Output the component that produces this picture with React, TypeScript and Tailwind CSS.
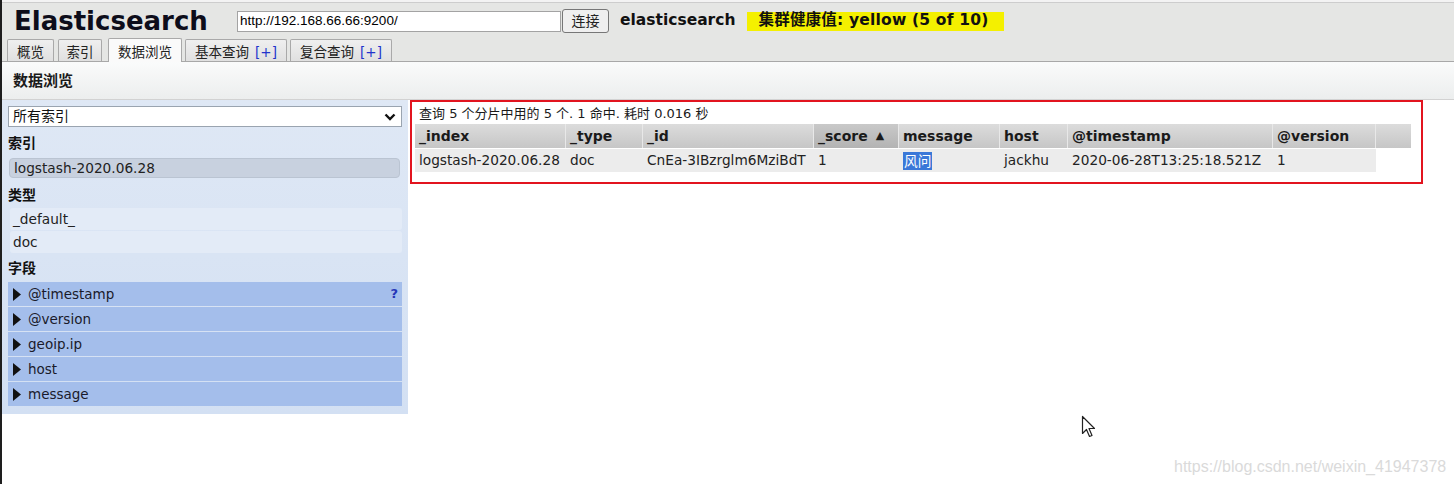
import React from "react";

const F = { fontFamily: '"DejaVu Sans", Verdana, "Noto Sans CJK SC", sans-serif' };

function Tab({ label, plus, active, w, ml }: { label: string; plus?: boolean; active?: boolean; w: string; ml: string }) {
  return (
    <div
      className={`${w} ${ml} flex items-end justify-center border border-b-0 border-[#a9a9a9] rounded-t-[2px] text-[13.5px] leading-[16px] text-[#222] ${
        active ? "bg-[#fafafa] h-[24px] -mb-px pb-[2px] relative z-10" : "h-[22px] pb-px bg-gradient-to-b from-[#efefef] to-[#e0e0e0]"
      }`}
    >
      <span>{label}</span>
      {plus && <span className="ml-[6px] text-[#2233cc]">[+]</span>}
    </div>
  );
}

function FieldRow({ name, q }: { name: string; q?: boolean }) {
  return (
    <div className="h-[24px] bg-[#a4beeb] flex items-center pl-[5px] pr-[4px] text-[13.5px] text-[#1a1a2a]">
      <svg width="8" height="13" viewBox="0 0 8 13" className="mr-[7px]">
        <polygon points="0,0 8,6.5 0,13" fill="#111" />
      </svg>
      <span className="flex-1">{name}</span>
      {q && <span className="font-bold text-[#2536b8] text-[13px]">?</span>}
    </div>
  );
}

const cols: { name: string; w: string; val: string; sorted?: boolean; sel?: boolean }[] = [
  { name: "_index", w: "w-[151px]", val: "logstash-2020.06.28" },
  { name: "_type", w: "w-[77px]", val: "doc" },
  { name: "_id", w: "w-[171px]", val: "CnEa-3IBzrglm6MziBdT" },
  { name: "_score", w: "w-[85px]", val: "1", sorted: true },
  { name: "message", w: "w-[101px]", val: "风问", sel: true },
  { name: "host", w: "w-[68px]", val: "jackhu" },
  { name: "@timestamp", w: "w-[205px]", val: "2020-06-28T13:25:18.521Z" },
  { name: "@version", w: "w-[103px]", val: "1" },
];

export default function App() {
  return (
    <div className="w-[1454px] h-[484px] relative overflow-hidden bg-white border-l-2 border-[#1e1e1e]" style={F}>
      {/* top strip */}
      <div className="h-[3px] bg-[#f3f3f3] border-b border-[#cdcdcd]" />
      {/* header */}
      <div className="bg-[#e5e6e4]">
        <div className="h-[36px] flex items-center pl-[12px]">
          <div className="text-[26px] font-bold text-[#0d0d1a] leading-none w-[223px]">Elasticsearch</div>
          <div className="w-[324px] h-[21px] bg-white border border-[#a3a3a3] flex items-center pl-[2px] text-[13.5px] text-black" style={{ fontFamily: '"Liberation Sans", Arial, sans-serif' }}>
            http://192.168.66.66:9200/
          </div>
          <div className="ml-px w-[47px] h-[24px] rounded-[3px] border border-[#777] bg-[#efefef] flex items-center justify-center text-[14px] text-[#222]">
            连接
          </div>
          <div className="ml-[11px] text-[15.5px] font-bold text-[#111]">elasticsearch</div>
          <div className="ml-[11px] w-[257px] h-[19px] pl-[12px] bg-[#f4f000] flex items-center text-[15.5px] font-bold text-[#111] tracking-[0.2px]">
            集群健康值: yellow (5 of 10)
          </div>
        </div>
        <div className="h-[22px] flex items-end pl-[5px]">
          <Tab label="概览" w="w-[47px]" ml="ml-0" />
          <Tab label="索引" w="w-[44px]" ml="ml-[4px]" />
          <Tab label="数据浏览" w="w-[74px]" ml="ml-[6px]" active />
          <Tab label="基本查询" plus w="w-[102px]" ml="ml-[3px]" />
          <Tab label="复合查询" plus w="w-[102px]" ml="ml-[3px]" />
        </div>
      </div>
      {/* sub header */}
      <div className="h-[39px] border-t border-[#a8a8a8] border-b border-b-[#d2d2d2] bg-gradient-to-b from-[#fafbfb] to-[#eceeee] flex items-center pl-[11px] pt-[2px]">
        <span className="text-[15px] font-bold text-[#1a1a1a]">数据浏览</span>
      </div>
      {/* main */}
      <div className="flex items-start">
        {/* left panel */}
        <div className="w-[406px] h-[314px] bg-gradient-to-b from-[#dfe8f5] to-[#d3e0f3] px-[6px] pt-[6px] flex flex-col">
          <div className="h-[21px] bg-white border border-[#9aa4b0] flex items-center pl-[4px] pr-[5px] text-[14px] text-[#111]">
            <span className="flex-1">所有索引</span>
            <svg width="12" height="8" viewBox="0 0 12 8">
              <polyline points="1.5,1.5 6,6 10.5,1.5" fill="none" stroke="#111" strokeWidth="2.4" />
            </svg>
          </div>
          <div className="h-[22px] mt-[5px] flex items-center text-[14px] font-bold text-[#111]">索引</div>
          <div className="h-[20px] mt-[4px] ml-px mr-[2px] rounded-[4px] bg-[#c8d1df] border border-[#bac4d2] flex items-center pl-[4px] text-[13.7px] text-[#222]">
            logstash-2020.06.28
          </div>
          <div className="h-[22px] mt-[6px] flex items-center text-[14px] font-bold text-[#111]">类型</div>
          <div className="mt-[2px] ml-[2px] flex flex-col gap-px">
            <div className="h-[22px] rounded-[3px] bg-[#e3ebf7] flex items-center pl-[3px] text-[13.7px] text-[#222]">_default_</div>
            <div className="h-[22px] rounded-[3px] bg-[#e3ebf7] flex items-center pl-[3px] text-[13.7px] text-[#222]">doc</div>
          </div>
          <div className="h-[22px] mt-[4px] flex items-center text-[14px] font-bold text-[#111]">字段</div>
          <div className="mt-[3px] flex flex-col gap-px">
            <FieldRow name="@timestamp" q />
            <FieldRow name="@version" />
            <FieldRow name="geoip.ip" />
            <FieldRow name="host" />
            <FieldRow name="message" />
          </div>
        </div>
        {/* results */}
        <div className="ml-[2px] w-[1013px] h-[84px] border-2 border-[#e2141f] pl-[3px] pt-[3px]">
          <div className="h-[18px] flex items-center pl-[4px] text-[13px] text-[#1a1a1a]">
            查询 5 个分片中用的 5 个. 1 命中. 耗时 0.016 秒
          </div>
          <div className="flex h-[24px] mt-px">
            {cols.map((c) => (
              <div
                key={c.name}
                className={`${c.w} h-full border-r border-[#e8e8e8] flex items-center pl-[4px] text-[14px] font-bold text-[#1a1a1a] ${
                  c.sorted ? "bg-gradient-to-b from-[#c9c9c9] to-[#b3b3b3]" : "bg-gradient-to-b from-[#dcdcdc] to-[#c6c6c6]"
                }`}
              >
                {c.name}
                {c.sorted && <span className="ml-[8px] text-[11px]">▲</span>}
              </div>
            ))}
            <div className="w-[35px] h-full bg-gradient-to-b from-[#dcdcdc] to-[#c6c6c6]" />
          </div>
          <div className="flex h-[23px] mt-px">
            {cols.map((c) => (
              <div key={c.name} className={`${c.w} h-full bg-[#ececec] flex items-center pl-[4px] text-[13.7px] text-[#222]`}>
                {c.sel ? <span className="bg-[#3a78d8] text-white px-px leading-[18px]">{c.val}</span> : c.val}
              </div>
            ))}
          </div>
        </div>
      </div>
      {/* cursor */}
      <svg className="absolute left-[1079px] top-[415px]" width="16" height="24" viewBox="0 0 16 24">
        <path d="M1.5 1.5 L1.5 18.5 L5.5 14.5 L8.5 21.5 L11 20.5 L8 13.5 L13.5 13.5 Z" fill="#fff" stroke="#222" strokeWidth="1.2" strokeLinejoin="round" />
      </svg>
      {/* watermark */}
      <div
        className="absolute left-[1172px] top-[455px] text-[16px] text-[#dadada]"
        style={{ fontFamily: '"Liberation Sans", Arial, sans-serif' }}
      >
        https://blog.csdn.net/weixin_41947378
      </div>
    </div>
  );
}
